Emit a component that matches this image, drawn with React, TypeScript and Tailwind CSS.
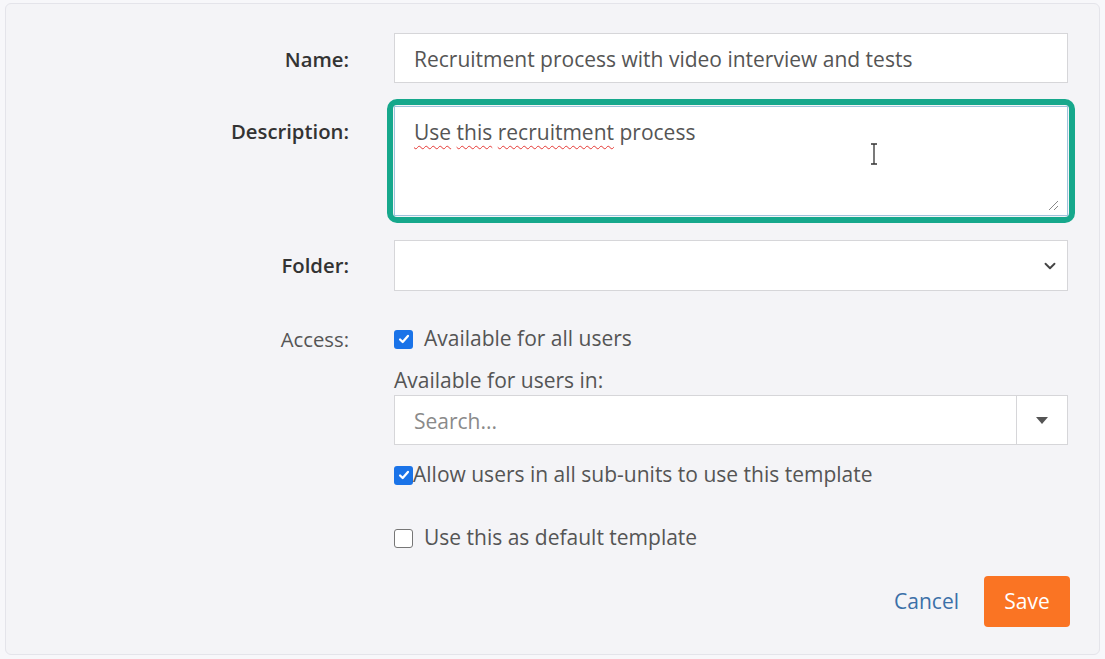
import { ChevronDown } from 'lucide-react';

function Check({ checked }: { checked: boolean }) {
    return checked ? (
        <span className="w-[19px] h-[19px] rounded-[3px] bg-[#1a73e8] flex items-center justify-center shrink-0">
            <svg className="w-[14px] h-[14px]" viewBox="0 0 16 16" fill="none" stroke="white" strokeWidth={2.6} strokeLinecap="round" strokeLinejoin="round">
                <path d="M3.5 8.5l3 3 6-7" />
            </svg>
        </span>
    ) : (
        <span className="w-[19px] h-[19px] rounded-[3px] border-[1.5px] border-[#767676] bg-white shrink-0" />
    );
}

const squiggle = 'underline decoration-wavy decoration-[#e53935] decoration-1 underline-offset-[5px]';

export default function App() {
    return (
        <div className="min-h-screen bg-[#f7f7fa] pt-[3px] pl-[5px] pr-[5px] pb-[4px] font-['Open_Sans',sans-serif]">
            <div className="h-[652px] border border-[#e4e4ea] rounded-[6px] bg-[#f4f4f7] pl-[37px] pt-[29px]">
                <div className="grid grid-cols-[306px_674px] gap-x-[45px] text-[21px]">
                    {/* Name */}
                    <div className="h-[50px] pt-[3px] flex items-center justify-end font-semibold text-[#333] text-[20.3px]">Name:</div>
                    <div className="h-[50px] pt-[3px] border border-[#d6d6d9] bg-white flex items-center px-[19px] text-[#555]">
                        Recruitment process with video interview and tests
                    </div>

                    {/* Description */}
                    <div className="mt-[23px] pt-[10px] flex justify-end font-semibold text-[#333] text-[20.3px]">Description:</div>
                    <div className="mt-[23px] h-[110px] relative">
                        <div className="absolute -inset-[7px] rounded-[10px] border-[6px] border-[#16a88c]" />
                        <div className="h-full border border-[#9ec3dc] bg-white px-[19px] pt-[10px] text-[#555] relative">
                            <span className={squiggle}>Use</span>{' '}
                            <span className={squiggle}>this</span>{' '}
                            <span className={squiggle}>recruitment</span> process
                            <svg className="absolute right-[8px] bottom-[4px] w-[12px] h-[12px]" viewBox="0 0 12 12" stroke="#888" strokeWidth={1}>
                                <path d="M11 2L2 11M11 7L7 11" />
                            </svg>
                            <svg className="absolute left-[474px] top-[36px] w-[10px] h-[22px]" viewBox="0 0 10 22" fill="none" stroke="#333" strokeWidth={1.3}>
                                <path d="M2 1h6M5 1v20M2 21h6" />
                            </svg>
                        </div>
                    </div>

                    {/* Folder */}
                    <div className="mt-[24px] h-[51px] flex items-center justify-end font-semibold text-[#333] text-[20.3px]">Folder:</div>
                    <div className="mt-[24px] h-[51px] border border-[#d6d6d9] bg-white flex items-center justify-end pr-[8px]">
                        <ChevronDown className="w-[18px] h-[18px] text-[#444]" strokeWidth={2.5} />
                    </div>

                    {/* Access */}
                    <div className="mt-[34px] h-[28px] flex items-center justify-end text-[#555] text-[20.3px]">Access:</div>
                    <div className="mt-[34px] flex flex-col">
                        <div className="h-[28px] flex items-center gap-[11px] text-[#555]">
                            <Check checked />
                            <span>Available for all users</span>
                        </div>
                        <div className="mt-[14px] h-[28px] flex items-center text-[#555]">Available for users in:</div>
                        <div className="h-[50px] pt-[3px] border border-[#d6d6d9] bg-white flex">
                            <div className="flex-1 flex items-center px-[19px] text-[#8a8a8a]">Search...</div>
                            <div className="w-[51px] -mt-[3px] border-l border-[#d6d6d9] flex items-center justify-center">
                                <span className="w-0 h-0 border-l-[6px] border-r-[6px] border-t-[7px] border-l-transparent border-r-transparent border-t-[#555]" />
                            </div>
                        </div>
                        <div className="mt-[16px] h-[28px] flex items-center text-[#555]">
                            <Check checked />
                            <span>Allow users in all sub-units to use this template</span>
                        </div>
                        <div className="mt-[35px] h-[28px] flex items-center gap-[11px] text-[#555]">
                            <Check checked={false} />
                            <span>Use this as default template</span>
                        </div>
                        <div className="mt-[24px] flex items-center justify-end gap-[25px] -mr-[2px]">
                            <span className="text-[#3b70a8]">Cancel</span>
                            <button className="h-[51px] w-[86px] rounded-[4px] bg-[#fa7423] text-white">Save</button>
                        </div>
                    </div>
                </div>
            </div>
        </div>
    );
}
